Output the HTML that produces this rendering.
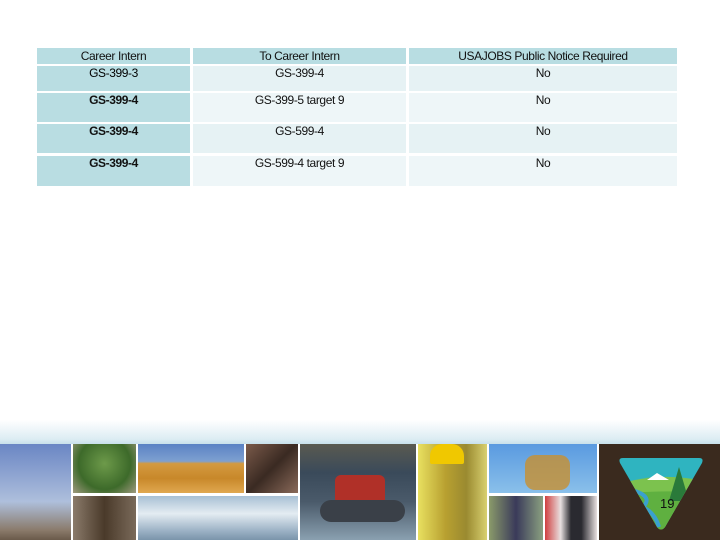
<!DOCTYPE html>
<html><head><meta charset="utf-8"><style>
body{margin:0;width:720px;height:540px;position:relative;overflow:hidden;background:#fff;font-family:"Liberation Sans",Arial,sans-serif;}
.c{position:absolute;font-size:12px;color:#111;text-align:center;box-sizing:border-box;padding-top:0px;letter-spacing:-0.4px;line-height:14px}
.h{background:#b8dde2;}
.k{background:#b9dde2;font-weight:bold;}
.a{background:#e6f2f4;}
.b{background:#eef6f8;}
.p{position:absolute;}
</style></head><body>
<div class="c h" style="left:37px;top:48px;width:153px;height:16px;padding-top:1px">Career Intern</div>
<div class="c h" style="left:193px;top:48px;width:213px;height:16px;padding-top:1px">To Career Intern</div>
<div class="c h" style="left:409px;top:48px;width:268px;height:16px;padding-top:1px">USAJOBS Public Notice Required</div>

<div class="c k" style="left:37px;top:66px;width:153px;height:25px;font-weight:normal;color:#000">GS-399-3</div>
<div class="c a" style="left:193px;top:66px;width:213px;height:25px">GS-399-4</div>
<div class="c a" style="left:409px;top:66px;width:268px;height:25px">No</div>

<div class="c k" style="left:37px;top:93px;width:153px;height:29px">GS-399-4</div>
<div class="c b" style="left:193px;top:93px;width:213px;height:29px">GS-399-5 target 9</div>
<div class="c b" style="left:409px;top:93px;width:268px;height:29px">No</div>

<div class="c k" style="left:37px;top:124px;width:153px;height:29px">GS-399-4</div>
<div class="c a" style="left:193px;top:124px;width:213px;height:29px">GS-599-4</div>
<div class="c a" style="left:409px;top:124px;width:268px;height:29px">No</div>

<div class="c k" style="left:37px;top:156px;width:153px;height:30px">GS-399-4</div>
<div class="c b" style="left:193px;top:156px;width:213px;height:30px">GS-599-4 target 9</div>
<div class="c b" style="left:409px;top:156px;width:268px;height:30px">No</div>

<div class="p" style="left:0;top:420px;width:720px;height:24px;background:linear-gradient(#fff,#dcecf3 80%,#c8e0ea)"></div>
<div class="p" style="left:0;top:444px;width:720px;height:96px;background:#fff"></div>
<div class="p" style="left:0;top:444px;width:71px;height:96px;background:linear-gradient(#6a86c4,#aebfdc 60%,#8a7a6a 90%,#6a5a4a)"></div>
<div class="p" style="left:73px;top:444px;width:63px;height:49px;background:radial-gradient(circle at 50% 40%,#6d9a4a,#3d6a2a 60%,#a09a80)"></div>
<div class="p" style="left:73px;top:496px;width:63px;height:44px;background:linear-gradient(90deg,#8a7a6a,#4a3a2a,#7a6a5a)"></div>
<div class="p" style="left:138px;top:444px;width:106px;height:49px;background:linear-gradient(#5a82c4,#7ea0d0 35%,#d49a40 40%,#c8882a 70%,#e0a850)"></div>
<div class="p" style="left:246px;top:444px;width:52px;height:49px;background:linear-gradient(135deg,#7a5a4a,#3a2a22 50%,#8a6a5a)"></div>
<div class="p" style="left:138px;top:496px;width:160px;height:44px;background:linear-gradient(#a8c0d4,#e4ecf2 40%,#9ab0c4 80%,#7a94aa)"></div>
<div class="p" style="left:300px;top:444px;width:116px;height:96px;background:linear-gradient(#5a5a50,#3a4a5a 30%,#4a5a6a 60%,#8aa0b0)"></div>
<div class="p" style="left:335px;top:475px;width:50px;height:30px;background:#b03028;border-radius:6px"></div>
<div class="p" style="left:320px;top:500px;width:85px;height:22px;background:#3a4048;border-radius:12px"></div>
<div class="p" style="left:418px;top:444px;width:69px;height:96px;background:linear-gradient(90deg,#e8e060,#b8a030 40%,#9a8a30 70%,#d8d070)"></div>
<div class="p" style="left:430px;top:444px;width:34px;height:20px;background:#f0c800;border-radius:12px 12px 2px 2px"></div>
<div class="p" style="left:489px;top:444px;width:108px;height:49px;background:linear-gradient(#5a9ae0,#8ac0ea)"></div>
<div class="p" style="left:525px;top:455px;width:45px;height:35px;background:#c89030;border-radius:10px;opacity:.8"></div>
<div class="p" style="left:489px;top:496px;width:54px;height:44px;background:linear-gradient(90deg,#8a9a6a,#3a3a5a,#8aa080)"></div>
<div class="p" style="left:545px;top:496px;width:52px;height:44px;background:linear-gradient(90deg,#d04040,#e8e0e0 30%,#2a2a30 50%,#2a2a30 70%,#e8e0e0)"></div>
<div class="p" style="left:599px;top:444px;width:121px;height:96px;background:#3a2a1e"></div>
<svg class="p" style="left:617px;top:455px" width="88" height="76" viewBox="0 0 88 76">
<defs><clipPath id="s"><path d="M6 3 L82 3 Q87 3 85 8 L48 72 Q44 77 40 72 L3 8 Q1 3 6 3 Z"/></clipPath></defs>
<path d="M6 3 L82 3 Q87 3 85 8 L48 72 Q44 77 40 72 L3 8 Q1 3 6 3 Z" fill="#2fb4c0"/>
<g clip-path="url(#s)">
<path d="M0 30 Q40 16 88 26 L88 80 L0 80 Z" fill="#7cc24e"/>
<path d="M0 40 Q40 34 88 38 L88 80 L0 80 Z" fill="#5fb040"/>
<path d="M18 36 Q36 42 26 52 Q38 58 42 72" stroke="#3aa0d0" stroke-width="4" fill="none"/>
<path d="M62 12 L72 46 L52 46 Z" fill="#2a7a3a"/>
</g>
<path d="M30 25 L40 18 L52 25 Z" fill="#fff"/>
</svg>
<div class="p" style="left:660px;top:496px;font-size:13px;color:#111">19</div>
</body></html>
